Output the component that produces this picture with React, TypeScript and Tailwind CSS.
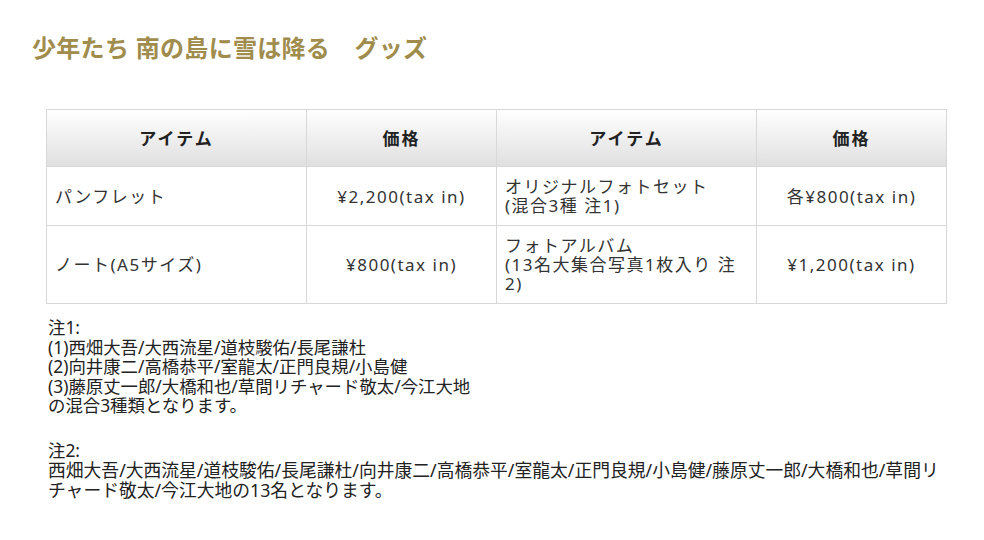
import React from "react";

const font = { fontFamily: '"Noto Sans", "Noto Sans CJK JP", sans-serif' };

const rows = [
  {
    item1: "パンフレット",
    price1: "¥2,200(tax in)",
    item2: ["オリジナルフォトセット", "(混合3種 注1)"],
    price2: "各¥800(tax in)",
  },
  {
    item1: "ノート(A5サイズ)",
    price1: "¥800(tax in)",
    item2: ["フォトアルバム", "(13名大集合写真1枚入り 注2)"],
    price2: "¥1,200(tax in)",
  },
];

export default function App() {
  return (
    <div className="w-[984px] h-[540px] bg-white text-[#333]" style={font}>
      <div className="px-8 pt-[32px]">
        <h1 className="text-[24px] leading-[31px] font-bold text-[#a08c4c] tracking-[0.3px]">
          少年たち 南の島に雪は降る　グッズ
        </h1>
      </div>

      <div className="pl-[46px] pr-[38px] pt-[46px]">
        <table className="w-full border-collapse border border-[#d8d8d8] text-[17px] leading-[19px] tracking-[1.5px] table-fixed">
          <colgroup>
            <col className="w-[260px]" />
            <col className="w-[190px]" />
            <col className="w-[260px]" />
            <col className="w-[190px]" />
          </colgroup>
          <thead>
            <tr className="bg-gradient-to-b from-white to-[#dfdfdf]">
              {["アイテム", "価格", "アイテム", "価格"].map((h, i) => (
                <th
                  key={i}
                  className="h-[57px] border border-[#d8d8d8] font-bold text-[#222] text-center tracking-[2px]"
                >
                  {h}
                </th>
              ))}
            </tr>
          </thead>
          <tbody>
            {rows.map((r, i) => (
              <tr key={i}>
                <td className="border border-[#d8d8d8] px-2 py-[10px] text-left align-middle">
                  {r.item1}
                </td>
                <td className="border border-[#d8d8d8] px-2 py-[10px] text-center align-middle">
                  {r.price1}
                </td>
                <td className="border border-[#d8d8d8] px-2 py-[10px] text-left align-middle">
                  {r.item2.map((t, j) => (
                    <div key={j}>{t}</div>
                  ))}
                </td>
                <td className="border border-[#d8d8d8] px-2 py-[10px] text-center align-middle">
                  {r.price2}
                </td>
              </tr>
            ))}
          </tbody>
        </table>

        <div className="pt-[14px] pl-[2px] text-[17.4px] leading-[19.5px] text-[#222]">
          <p>注1:</p>
          <p>(1)西畑大吾/大西流星/道枝駿佑/長尾謙杜</p>
          <p>(2)向井康二/高橋恭平/室龍太/正門良規/小島健</p>
          <p>(3)藤原丈一郎/大橋和也/草間リチャード敬太/今江大地</p>
          <p>の混合3種類となります。</p>
          <p className="h-[25px]"></p>
          <p>注2:</p>
          <p className="text-[17.8px] leading-[20px]">
            西畑大吾/大西流星/道枝駿佑/長尾謙杜/向井康二/高橋恭平/室龍太/正門良規/小島健/藤原丈一郎/大橋和也/草間リチャード敬太/今江大地の13名となります。
          </p>
        </div>
      </div>
    </div>
  );
}
